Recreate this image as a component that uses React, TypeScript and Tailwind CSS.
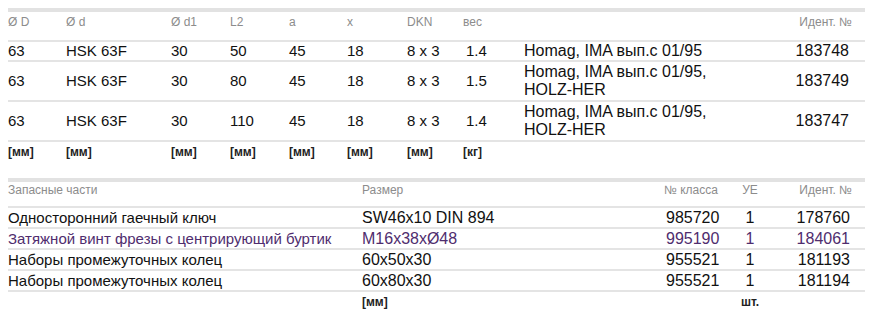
const font = { fontFamily: '"Liberation Sans", Arial, sans-serif' };

type Row1 = { D: string; d: string; d1: string; L2: string; a: string; x: string; dkn: string; w: string; desc: string[]; id: string };

const rows1: Row1[] = [
  { D: '63', d: 'HSK 63F', d1: '30', L2: '50', a: '45', x: '18', dkn: '8 x 3', w: '1.4', desc: ['Homag, IMA вып.с 01/95'], id: '183748' },
  { D: '63', d: 'HSK 63F', d1: '30', L2: '80', a: '45', x: '18', dkn: '8 x 3', w: '1.5', desc: ['Homag, IMA вып.с 01/95,', 'HOLZ-HER'], id: '183749' },
  { D: '63', d: 'HSK 63F', d1: '30', L2: '110', a: '45', x: '18', dkn: '8 x 3', w: '1.4', desc: ['Homag, IMA вып.с 01/95,', 'HOLZ-HER'], id: '183747' },
];

const parts = [
  { name: 'Односторонний гаечный ключ', size: 'SW46x10 DIN 894', cls: '985720', ue: '1', id: '178760', purple: false },
  { name: 'Затяжной винт фрезы с центрирующий буртик', size: 'M16x38xØ48', cls: '995190', ue: '1', id: '184061', purple: true },
  { name: 'Наборы промежуточных колец', size: '60x50x30', cls: '955521', ue: '1', id: '181193', purple: false },
  { name: 'Наборы промежуточных колец', size: '60x80x30', cls: '955521', ue: '1', id: '181194', purple: false },
];

const widths1 = [58, 105, 59, 59, 58, 60, 56, 61, 240, 101];

export default function App() {
  return (
    <div className="w-[874px] h-[317px] bg-white text-[#111] overflow-hidden pl-2 pr-[9px] pt-2" style={font}>
      {/* Tool table */}
      <table className="w-full table-fixed border-collapse border-t-4 border-[#e2e2e2]">
        <colgroup>
          {widths1.map((w, i) => (
            <col key={i} style={{ width: w }} />
          ))}
        </colgroup>
        <thead>
          <tr className="border-b-2 border-[#e4e4e4] h-[31px] text-[12px] leading-[14px] text-[#8c8c8c] align-top">
            <th className="font-normal text-left pt-[3px]">Ø D</th>
            <th className="font-normal text-left pt-[3px]">Ø d</th>
            <th className="font-normal text-left pt-[3px]">Ø d1</th>
            <th className="font-normal text-left pt-[3px]">L2</th>
            <th className="font-normal text-left pt-[3px]">a</th>
            <th className="font-normal text-left pt-[3px]">x</th>
            <th className="font-normal text-left pt-[3px]">DKN</th>
            <th className="font-normal text-left pt-[3px]">вес</th>
            <th></th>
            <th className="font-normal text-right pt-[3px] pr-[13px]">Идент. №</th>
          </tr>
        </thead>
        <tbody className="text-[15px] leading-[18px]">
          {rows1.map((r) => (
            <tr key={r.id} className={`border-b-2 border-[#e4e4e4] ${r.desc.length > 1 ? 'h-[40px]' : 'h-[20px]'}`}>
              <td>{r.D}</td>
              <td>{r.d}</td>
              <td>{r.d1}</td>
              <td>{r.L2}</td>
              <td>{r.a}</td>
              <td>{r.x}</td>
              <td>{r.dkn}</td>
              <td className="pl-[3px]">{r.w}</td>
              <td className="text-[16px]">
                {r.desc.map((l) => (
                  <div key={l}>{l}</div>
                ))}
              </td>
              <td className="text-right pr-[16px] text-[16px]">{r.id}</td>
            </tr>
          ))}
          <tr className="h-[16px] text-[12px] leading-[13px] font-bold text-[#222] align-top">
            <td className="pt-[4px]">[мм]</td>
            <td className="pt-[4px]">[мм]</td>
            <td className="pt-[4px]">[мм]</td>
            <td className="pt-[4px]">[мм]</td>
            <td className="pt-[4px]">[мм]</td>
            <td className="pt-[4px]">[мм]</td>
            <td className="pt-[4px]">[мм]</td>
            <td className="pt-[4px]">[кг]</td>
            <td></td>
            <td></td>
          </tr>
        </tbody>
      </table>

      {/* Spare parts table */}
      <table className="w-full table-fixed border-collapse border-t-4 border-[#e2e2e2] mt-[19px]">
        <colgroup>
          <col style={{ width: 354 }} />
          <col style={{ width: 302 }} />
          <col style={{ width: 66 }} />
          <col style={{ width: 40 }} />
          <col style={{ width: 95 }} />
        </colgroup>
        <thead>
          <tr className="border-b-2 border-[#e4e4e4] h-[27px] text-[12px] leading-[14px] text-[#8c8c8c] align-top">
            <th className="font-normal text-left pt-[1px]">Запасные части</th>
            <th className="font-normal text-left pt-[1px]">Размер</th>
            <th className="font-normal text-left pt-[1px]">№ класса</th>
            <th className="font-normal text-center pt-[1px]">УЕ</th>
            <th className="font-normal text-right pt-[1px] pr-[13px]">Идент. №</th>
          </tr>
        </thead>
        <tbody className="text-[16px] leading-[18px]">
          {parts.map((p) => (
            <tr key={p.id} className={`border-b-2 border-[#e4e4e4] h-[21px] ${p.purple ? 'text-[#4f2d6e]' : ''}`}>
              <td className="whitespace-nowrap text-[15px]">{p.name}</td>
              <td>{p.size}</td>
              <td className="pl-[2px]">{p.cls}</td>
              <td className="text-center">{p.ue}</td>
              <td className="text-right pr-[15px]">{p.id}</td>
            </tr>
          ))}
          <tr className="text-[12px] leading-[13px] font-bold text-[#222] align-top">
            <td></td>
            <td className="pt-[4px]">[мм]</td>
            <td></td>
            <td className="text-center pt-[4px]">шт.</td>
            <td></td>
          </tr>
        </tbody>
      </table>
    </div>
  );
}
